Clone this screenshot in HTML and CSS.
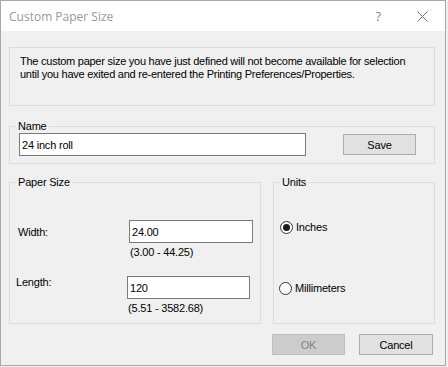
FILE: index.html
```html
<!DOCTYPE html>
<html lang="en">
<head>
    <meta charset="UTF-8">
    <title>Custom Paper Size</title>
    <link rel="stylesheet" href="styles.css">
</head>
<body>

<div class="window">
    <div class="titlebar">
        <span class="title">Custom Paper Size</span>
        <span class="help">?</span>
        <span class="close">
            <svg width="11" height="11" viewBox="0 0 11 11">
                <path d="M0.5 0.5 L10.5 10.5 M10.5 0.5 L0.5 10.5" stroke="#707070" stroke-width="1" fill="none"/>
            </svg>
        </span>
    </div>

    <div class="content">
        <div class="notice">
            The custom paper size you have just defined will not become available for selection<br>
            until you have exited and re-entered the Printing Preferences/Properties.
        </div>

        <fieldset class="group group-name">
            <legend>Name</legend>
            <div class="name-row">
                <input type="text" class="text-input name-input" value="24 inch roll">
                <button class="btn btn-save">Save</button>
            </div>
        </fieldset>

        <div class="groups-row">
            <fieldset class="group group-size">
                <legend>Paper Size</legend>
                <div class="field field-width">
                    <label class="field-label">Width:</label>
                    <div class="field-input">
                        <input type="text" class="text-input" value="24.00">
                        <div class="hint">(3.00 - 44.25)</div>
                    </div>
                </div>
                <div class="field field-length">
                    <label class="field-label">Length:</label>
                    <div class="field-input">
                        <input type="text" class="text-input" value="120">
                        <div class="hint">(5.51 - 3582.68)</div>
                    </div>
                </div>
            </fieldset>

            <fieldset class="group group-units">
                <legend>Units</legend>
                <div class="radio radio-inches">
                    <span class="radio-mark checked"></span>
                    <span>Inches</span>
                </div>
                <div class="radio radio-mm">
                    <span class="radio-mark"></span>
                    <span>Millimeters</span>
                </div>
            </fieldset>
        </div>

        <div class="actions">
            <button class="btn btn-ok" disabled>OK</button>
            <button class="btn btn-cancel">Cancel</button>
        </div>
    </div>
</div>

</body>
</html>
```

FILE: styles.css
```css
body {
    margin: 0;
    padding: 0;
    background-color: #f0f0f0;
    font-family: "Liberation Sans", Arial, sans-serif;
    font-size: 11px;
    line-height: 13px;
    letter-spacing: -0.2px;
    color: #000;
}
.window {
    width: 446px;
    height: 366px;
    box-sizing: border-box;
    border: 1px solid #a8a8a8;
    background-color: #f0f0f0;
    display: flex;
    flex-direction: column;
}
.titlebar {
    height: 30px;
    background-color: #fff;
    display: flex;
    align-items: center;
    padding: 0 17px 0 8px;
    letter-spacing: 0;
}
.title {
    flex: 1;
    font-family: "Open Sans", "Noto Sans", sans-serif;
    font-size: 12px;
    color: #999;
}
.help {
    font-family: "Open Sans", "Noto Sans", sans-serif;
    font-size: 13px;
    color: #8a8a8a;
    margin-right: 36px;
}
.close svg {
    display: block;
}
.content {
    padding: 0 10px 0 8px;
}
.notice {
    margin-top: 16px;
    height: 59px;
    box-sizing: border-box;
    border: 1px solid #dcdcdc;
    padding: 7px 10px;
    white-space: nowrap;
    letter-spacing: -0.25px;
}

/* group boxes */
.group {
    margin: 0;
    border: 1px solid #dcdcdc;
    min-width: 0;
}
.group legend {
    margin-left: 6px;
    padding: 0 2px;
    line-height: 13px;
}
.group-name {
    margin-top: 14px;
    padding: 0 18px 7px 9px;
}
.group-name legend {
    margin-left: -3px;
}
.name-row {
    display: flex;
    align-items: center;
    justify-content: space-between;
}
.text-input {
    box-sizing: border-box;
    height: 23px;
    margin: 0;
    padding: 2px 2px;
    border: 1px solid #7a7a7a;
    background: #fff;
    font-family: inherit;
    font-size: 11px;
    line-height: 13px;
    letter-spacing: -0.2px;
    color: #000;
    outline: none;
}
.name-input {
    width: 287px;
}

.groups-row {
    display: flex;
    gap: 12px;
    margin-top: 12px;
}
.group-size {
    width: 252px;
    box-sizing: border-box;
    padding: 31px 0 8px 0;
}
.group-units {
    width: 162px;
    box-sizing: border-box;
    padding: 32px 0 0 0;
}
.field {
    display: flex;
    align-items: flex-start;
}
.field-width {
    padding-left: 8px;
}
.field-width .field-label {
    padding-top: 6px;
}
.field-width .text-input {
    width: 124px;
}
.field-length {
    padding-left: 6px;
    margin-top: 17px;
}
.field-length .text-input {
    width: 123px;
}
.field-label {
    width: 111px;
    flex-shrink: 0;
}
.field-input .text-input {
    display: block;
}
.hint {
    margin-top: 3px;
    padding-left: 1px;
}

/* radio buttons */
.radio {
    display: flex;
    align-items: center;
    gap: 3px;
}
.radio-inches {
    padding-left: 6px;
}
.radio-mm {
    padding-left: 5px;
    margin-top: 48px;
}
.radio-mark {
    width: 13px;
    height: 13px;
    box-sizing: border-box;
    border: 1px solid #333;
    border-radius: 50%;
    background: #fff;
    display: flex;
    align-items: center;
    justify-content: center;
}
.radio-mark.checked::after {
    content: "";
    width: 7px;
    height: 7px;
    border-radius: 50%;
    background: #1a1a1a;
}

/* buttons */
.btn {
    height: 21px;
    box-sizing: border-box;
    border: 1px solid #adadad;
    background-color: #e1e1e1;
    font-family: inherit;
    font-size: 11px;
    letter-spacing: -0.2px;
    color: #000;
    padding: 0;
}
.btn-save {
    width: 73px;
}
.actions {
    display: flex;
    justify-content: flex-end;
    gap: 14px;
    margin-top: 10px;
    padding-right: 2px;
}
.btn-ok {
    width: 73px;
    background-color: #ccc;
    border-color: #bfbfbf;
    color: #838383;
}
.btn-cancel {
    width: 74px;
}
```
